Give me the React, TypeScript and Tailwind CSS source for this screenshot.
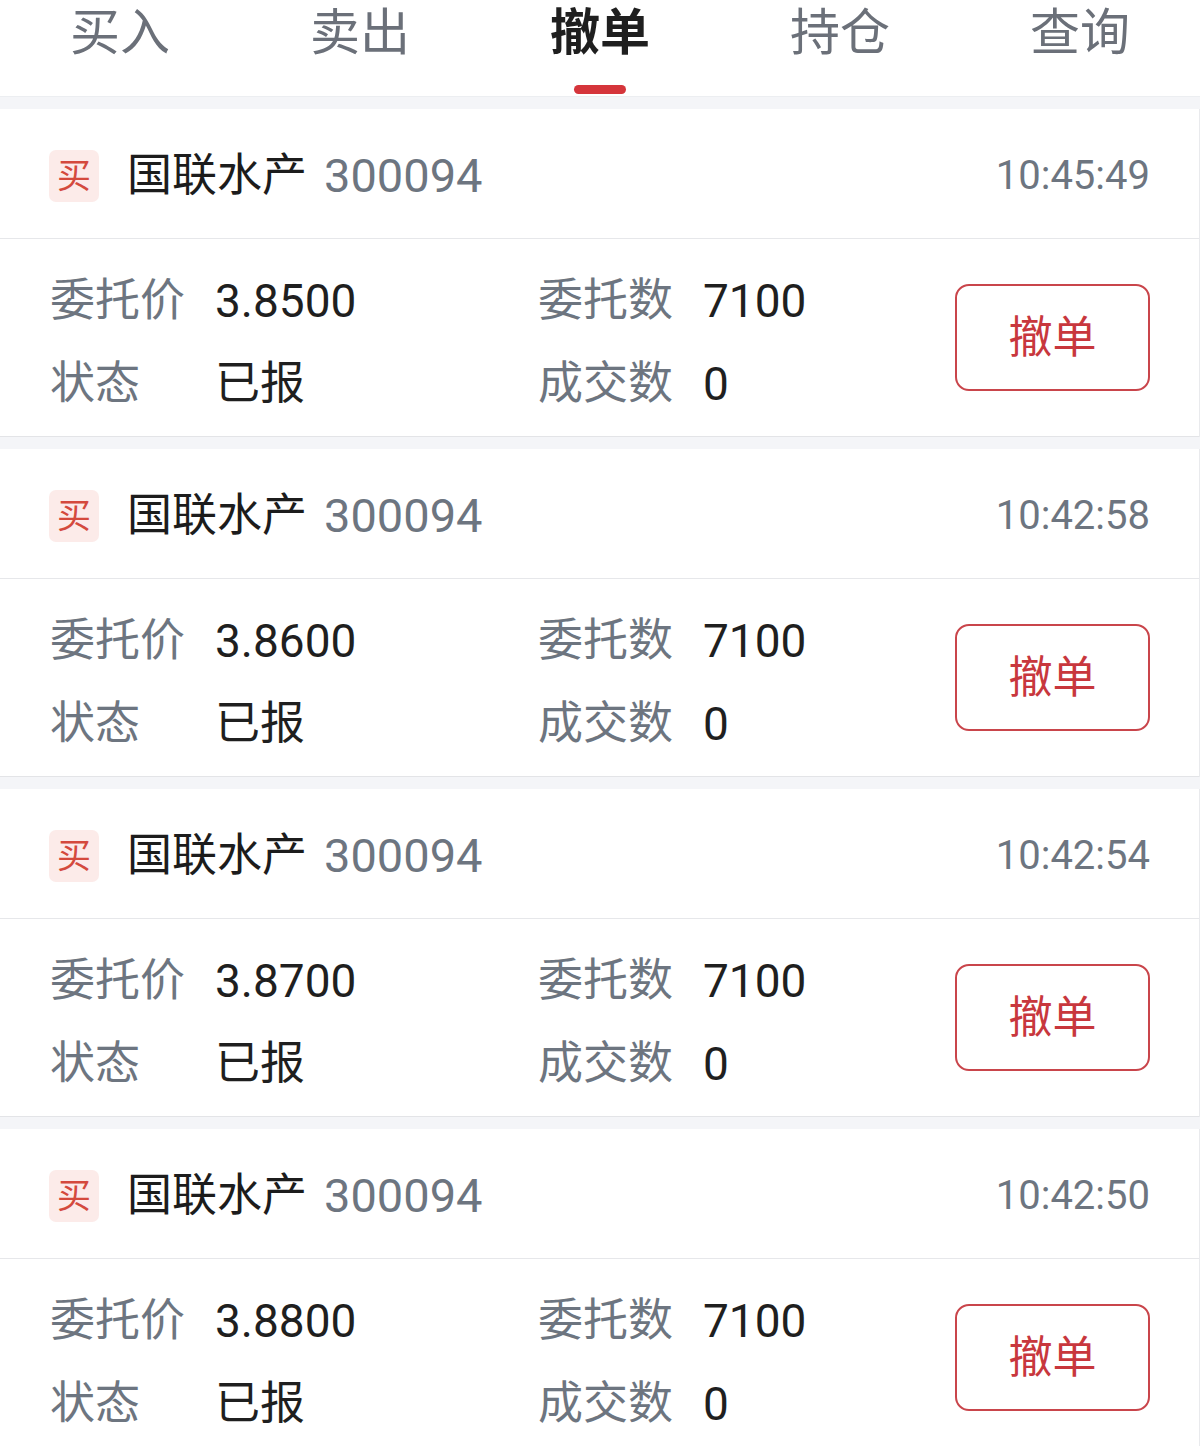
import React from "react"

const tabs = ["买入", "卖出", "撤单", "持仓", "查询"]

const orders = [
  { time: "10:45:49", price: "3.8500" },
  { time: "10:42:58", price: "3.8600" },
  { time: "10:42:54", price: "3.8700" },
  { time: "10:42:50", price: "3.8800" },
]

const font = { fontFamily: '"Roboto", "Noto Sans CJK SC", sans-serif' }

function OrderCard({ time, price }: { time: string; price: string }) {
  return (
    <div className="bg-white border-r border-[#e9eaed]">
      <div className="h-[130px] flex items-center pt-[4px] pl-[49px] pr-[49px] border-b border-[#e6e7ea]">
        <div className="w-[50px] h-[52px] rounded-[7px] bg-[#fcebe9] flex items-center justify-center text-[34px] leading-none text-[#d44a3d]">
          买
        </div>
        <span className="ml-[28px] text-[45px] leading-none text-[#1c1c1c]">国联水产</span>
        <span className="ml-[17px] text-[47px] leading-none text-[#6d7580]">300094</span>
        <span className="ml-auto text-[40px] leading-none text-[#6d7580]">{time}</span>
      </div>
      <div className="h-[198px] flex items-center pl-[50px] pr-[49px] border-b border-[#e3e4e7]">
        <div className="flex flex-col gap-[23px] pt-[10px]">
          <div className="flex h-[60px] items-center">
            <div className="w-[488px] flex items-center">
              <span className="w-[165px] text-[45px] text-[#6d7580]">委托价</span>
              <span className="text-[46px] text-[#1f1f1f]">{price}</span>
            </div>
            <span className="w-[165px] text-[45px] text-[#6d7580]">委托数</span>
            <span className="text-[46px] text-[#1f1f1f]">7100</span>
          </div>
          <div className="flex h-[60px] items-center">
            <div className="w-[488px] flex items-center">
              <span className="w-[165px] text-[45px] text-[#6d7580]">状态</span>
              <span className="text-[45px] text-[#1f1f1f]">已报</span>
            </div>
            <span className="w-[165px] text-[45px] text-[#6d7580]">成交数</span>
            <span className="text-[46px] text-[#1f1f1f]">0</span>
          </div>
        </div>
        <button className="ml-auto w-[195px] h-[107px] rounded-[14px] border-2 border-[#c9454b] text-[44px] text-[#c8373d] flex items-center justify-center">
          撤单
        </button>
      </div>
    </div>
  )
}

export default function App() {
  return (
    <main className="min-h-screen bg-[#f4f5f8]" style={font}>
      <nav className="h-[97px] bg-white flex border-b border-[#eceef1]">
        {tabs.map((tab) => {
          const active = tab === "撤单"
          return (
            <div key={tab} className="flex-1 flex flex-col items-center">
              <span
                className={
                  active
                    ? "text-[50px] leading-[66px] font-bold text-[#1f1f1f]"
                    : "text-[50px] leading-[66px] text-[#6b7079]"
                }
              >
                {tab}
              </span>
              {active && <div className="mt-[19px] w-[52px] h-[9px] rounded-full bg-[#d5353b]" />}
            </div>
          )
        })}
      </nav>
      <div className="flex flex-col gap-[12px] pt-[12px]">
        {orders.map((o) => (
          <OrderCard key={o.time} time={o.time} price={o.price} />
        ))}
      </div>
    </main>
  )
}
